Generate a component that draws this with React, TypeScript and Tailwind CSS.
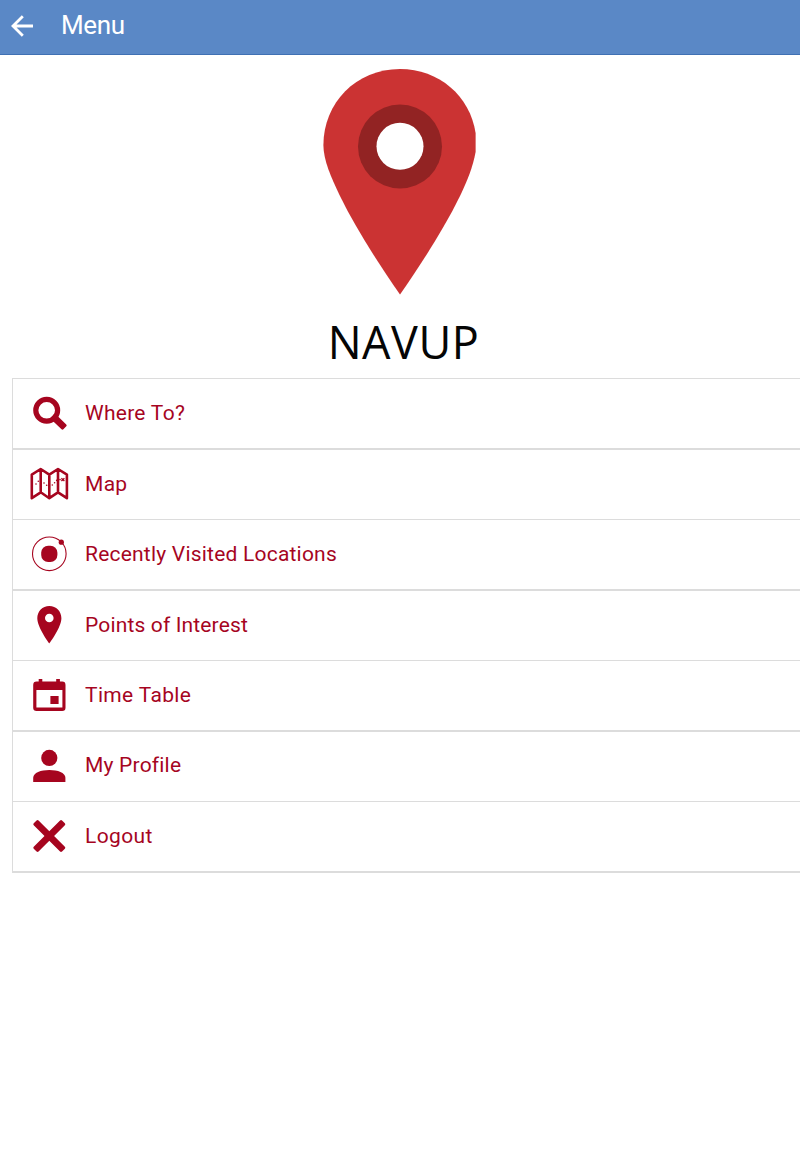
import type { ReactNode } from "react";

const dots: [number, number][] = [
  [7, 20], [9.3, 17.2], [12, 16.4], [15, 19], [17.7, 21.3], [20.3, 22],
  [23.3, 21], [25.6, 18.7], [27.7, 16.4], [31, 15.6],
];

function Icon({ children }: { children: ReactNode }) {
  return (
    <svg viewBox="0 0 40 40" className="mt-3.5 size-10 shrink-0 fill-[#a6051f] stroke-[#a6051f]" strokeWidth="0">
      {children}
    </svg>
  );
}

const items: { label: string; spacing: string; icon: ReactNode }[] = [
  {
    label: "Where To?",
    spacing: "pt-[18px] tracking-[0.28px]",
    icon: (
      <>
        <circle cx="17.7" cy="17.3" r="10.9" fill="none" strokeWidth="5.2" />
        <rect x="8" y="-3.4" width="17.2" height="6.8" rx="1.3" transform="translate(17.7 17.3) rotate(44)" />
      </>
    ),
  },
  {
    label: "Map",
    spacing: "pt-[18px] tracking-[0.3px]",
    icon: (
      <>
        <path
          d="M2.8 10.6 11.7 5 20.3 10.6 29 5 37.9 10.6V34.2L29 28.3 20.3 34.2 11.7 28.3 2.8 34.2ZM11.7 5V28.3M20.3 10.6V34.2M29 5V28.3"
          fill="none"
          strokeWidth="2.6"
          strokeLinejoin="round"
        />
        {dots.map(([x, y]) => (
          <circle key={x} cx={x} cy={y} r="0.8" />
        ))}
        <path d="M32.4 14.2 35.4 17M35.4 14.2 32.4 17" strokeWidth="1.3" />
      </>
    ),
  },
  {
    label: "Recently Visited Locations",
    spacing: "pt-[18px] tracking-[0.21px]",
    icon: (
      <>
        <circle cx="20.3" cy="19.8" r="16.8" fill="none" strokeWidth="1.1" />
        <rect x="12.2" y="11.8" width="16.2" height="16.2" rx="7" />
        <circle cx="32.3" cy="8.2" r="2.6" />
      </>
    ),
  },
  {
    label: "Points of Interest",
    spacing: "pt-[18px] tracking-[0.15px]",
    icon: (
      <path
        fillRule="evenodd"
        d="M20.3 1C13.4 1 8.3 6.4 8.3 13.2 8.3 22.4 20.3 38.4 20.3 38.4S32.4 22.4 32.4 13.2C32.4 6.4 27.2 1 20.3 1ZM20.3 8.7A4.3 4.3 0 1 1 20.3 17.3 4.3 4.3 0 0 1 20.3 8.7Z"
      />
    ),
  },
  {
    label: "Time Table",
    spacing: "pt-[18px] tracking-[0.35px]",
    icon: (
      <>
        <path
          fillRule="evenodd"
          d="M9.7 4H13.3V6.6H27.2V4H30.9V6.6H33.2Q36.5 6.6 36.5 10V32.7Q36.5 36 33.2 36H7.6Q4.2 36 4.2 32.7V10Q4.2 6.6 7.6 6.6H9.7ZM7.4 15V32.6H33.4V15Z"
        />
        <rect x="21.4" y="21" width="8.2" height="8" />
      </>
    ),
  },
  {
    label: "My Profile",
    spacing: "pt-[17px] tracking-[0.2px]",
    icon: (
      <>
        <circle cx="20.3" cy="11.9" r="8.1" />
        <path d="M4.2 36V31.8C4.2 26.7 12 24 20.3 24S36.4 26.7 36.4 31.8V36Z" />
      </>
    ),
  },
  {
    label: "Logout",
    spacing: "pt-[18px] tracking-[0.35px]",
    icon: (
      <>
        <rect x="-20" y="-3.4" width="40" height="6.8" rx="1.4" transform="translate(20.3 20) rotate(45)" />
        <rect x="-20" y="-3.4" width="40" height="6.8" rx="1.4" transform="translate(20.3 20) rotate(-45)" />
      </>
    ),
  },
];

export default function App() {
  return (
    <div className="min-h-[1170px] overflow-hidden bg-white font-[Roboto,sans-serif]">
      <header className="flex h-[55px] items-start border-b border-[#3f70b3] bg-[#5a88c6] text-white">
        <svg viewBox="0 0 24 24" className="mt-3.5 ml-2.5 size-6" fill="none" stroke="currentColor" strokeWidth="2.8">
          <path d="M23 12H3.5M12.8 2.2 3 12 12.8 21.8" />
        </svg>
        <h1 className="ml-[27px] pt-[9px] text-[26px] leading-8 tracking-[-0.4px]">Menu</h1>
      </header>

      <section className="flex flex-col items-center pt-3.5">
        <svg viewBox="0 0 154 226" className="h-[226px] w-[154px]">
          <path
            fill="#cb3333"
            d="M77 0C33 0 .4 34 .4 76C.4 91 8 108 16.5 126C34 162 58 198 77 225.6C96 198 120 162 137.5 126C144 112 150 98 152.6 83V64C147 27 116 0 77 0Z"
          />
          <circle cx="77" cy="77.5" r="42" fill="#922323" />
          <circle cx="77" cy="77.3" r="23.5" fill="#fff" />
        </svg>
        <p className="mt-[15px] ml-[7px] h-[68px] font-['Open_Sans',sans-serif] text-[45px] leading-[64px] tracking-[0.5px] text-[#050505]">NAVUP</p>
      </section>

      <ul className="ml-3 border-t border-l border-[#dcdcdc]">
        {items.map(({ label, spacing, icon }) => (
          <li
            key={label}
            className="box-content flex h-[69px] items-start border-b-2 border-[#dcdcdc] pl-4 text-[#a6051f] even:border-b"
          >
            <Icon>{icon}</Icon>
            <span className={`ml-4 text-[21px] leading-8 ${spacing}`}>{label}</span>
          </li>
        ))}
      </ul>
    </div>
  );
}
